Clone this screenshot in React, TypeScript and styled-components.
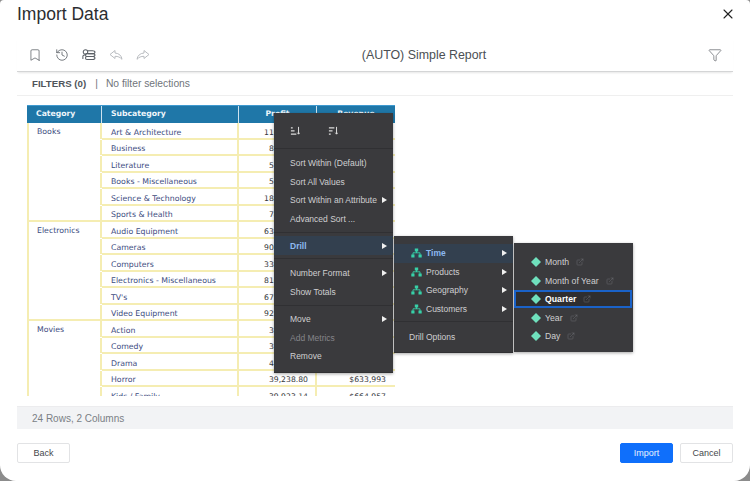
import styled, { createGlobalStyle } from 'styled-components';
import { Bookmark, ExternalLink, Funnel, History, X } from 'lucide-react';

const GlobalStyle = createGlobalStyle`
  html, body {
    margin: 0;
    padding: 0;
    background: #8c8c8c;
  }
  * {
    box-sizing: border-box;
  }
`;

const Modal = styled.div`
  width: 750px;
  height: 481px;
  padding: 0 17px;
  display: flex;
  flex-direction: column;
  overflow: hidden;
  background: #fff;
  border-radius: 4px 4px 16px 16px;
  font-family: "Liberation Sans", Arial, sans-serif;
`;

const Header = styled.div`
  height: 38px;
  padding-bottom: 10px;
  display: flex;
  align-items: center;
  justify-content: space-between;
`;

const Title = styled.h1`
  margin: 0;
  font-size: 17.5px;
  font-weight: 400;
  color: #2b2d30;
`;

const CloseButton = styled.span`
  display: flex;
  margin-right: -3px;
  color: #222;
`;

const Toolbar = styled.div`
  height: 34px;
  flex: none;
  display: flex;
  align-items: center;
  border-bottom: 1px solid #d4d5d6;
  box-shadow: 0 2px 2px -1px rgba(0, 0, 0, 0.1);
`;

const ToolIcons = styled.div`
  display: flex;
  align-items: center;
  gap: 13px;
  padding-left: 11px;
`;

const ToolIcon = styled.span<{ $muted?: boolean }>`
  display: flex;
  width: 14px;
  justify-content: center;
  color: ${props => (props.$muted ? '#b9bcc0' : '#5b6066')};
`;

const ReportName = styled.div`
  flex: 1;
  padding-right: 10px;
  text-align: center;
  font-size: 12.4px;
  color: #4b4f54;
`;

const FunnelSlot = styled.span`
  display: flex;
  margin-right: 11px;
  color: #5b6066;
`;

const FilterRow = styled.div`
  height: 24px;
  flex: none;
  padding-left: 15px;
  display: flex;
  align-items: center;
  font-size: 10.3px;
  color: #70757b;
  border-bottom: 1px solid #efefef;
`;

const FilterLabel = styled.strong`
  font-size: 9.7px;
  font-weight: 700;
  color: #50555b;
`;

const FilterDivider = styled.span`
  margin: 0 8px 0 9px;
`;

const ReportArea = styled.div`
  position: relative;
  height: 291px;
  margin-top: 9px;
  flex: none;
`;

const GridClip = styled.div`
  height: 100%;
  padding-left: 10px;
  overflow: hidden;
`;

const HeaderRow = styled.div`
  width: 368px;
  height: 18px;
  display: grid;
  grid-template-columns: 75px 137px 78px 78px;
  background: #1f77a8;
  border-top: 1px solid #3f9ad0;
`;

const HeaderCell = styled.div<{ $center?: boolean }>`
  padding-left: ${props => (props.$center ? 0 : '9px')};
  text-align: ${props => (props.$center ? 'center' : 'left')};
  font-family: "DejaVu Sans", Verdana, sans-serif;
  font-size: 7.7px;
  font-weight: 700;
  line-height: 15px;
  color: #eef6fb;
  border-right: 1px solid #cfe3ef;

  &:last-child {
    border-right: 0;
  }
`;

const Group = styled.div`
  width: 368px;
  display: flex;
  border-bottom: 2px solid #f5edb2;
`;

const CategoryCell = styled.div`
  width: 75px;
  flex: none;
  padding: 3px 0 0 8px;
  font-family: "DejaVu Sans", Verdana, sans-serif;
  font-size: 7.8px;
  line-height: 12px;
  color: #3d4c80;
  border-left: 2px solid #f5edb2;
`;

const GroupRows = styled.div`
  flex: 1;
`;

const DataRow = styled.div`
  height: 16.5px;
  display: grid;
  grid-template-columns: 137px 78px 78px;
  font-family: "DejaVu Sans", Verdana, sans-serif;
  font-size: 7.7px;
  line-height: 13px;
  border-bottom: 2px solid #f5edb2;

  &:last-child {
    height: 14.5px;
    border-bottom: 0;
  }
`;

const SubcategoryCell = styled.div`
  padding: 2.5px 0 0 9px;
  font-size: 7.8px;
  color: #3d4c80;
  box-shadow: -2px 0 0 #f5edb2, inset -2px 0 0 #f5edb2;
  white-space: nowrap;
`;

const ValueCell = styled.div`
  padding: 2.5px 9px 0 0;
  text-align: right;
  color: #36383c;
  box-shadow: inset -2px 0 0 #f5edb2;

  &:last-child {
    box-shadow: none;
  }
`;

const Menu = styled.div<{ $top: number; $left: number; $width: number }>`
  position: absolute;
  top: ${props => props.$top}px;
  left: ${props => props.$left}px;
  width: ${props => props.$width}px;
  background: #3a3a3d;
  box-shadow: 0 1px 3px rgba(0, 0, 0, 0.35);
`;

const SortIcons = styled.div`
  height: 36px;
  padding-left: 16px;
  display: flex;
  align-items: center;
  gap: 28px;
  color: #dcdcdc;
  border-bottom: 1px solid #303033;
`;

const MenuSection = styled.div<{ $top?: number; $bottom?: number }>`
  padding: ${props => props.$top ?? 5}px 0 ${props => props.$bottom ?? 4}px;
  border-bottom: 1px solid #303033;

  &:last-child {
    border-bottom: 0;
  }
`;

const MenuItem = styled.div<{ $active?: boolean; $disabled?: boolean; $indent?: number }>`
  position: relative;
  height: 18.6px;
  padding-left: ${props => props.$indent ?? 16}px;
  display: flex;
  align-items: center;
  gap: 4px;
  font-size: 8.5px;
  white-space: nowrap;
  font-weight: ${props => (props.$active ? 700 : 400)};
  color: ${props => (props.$active ? '#8db8ef' : props.$disabled ? '#85858a' : '#cfcfd1')};
  background: ${props => (props.$active ? '#33404f' : 'transparent')};
`;

const Arrow = styled.span`
  position: absolute;
  right: 6px;
  top: 50%;
  margin-top: -3px;
  border-left: 5px solid #f0f0f0;
  border-top: 3px solid transparent;
  border-bottom: 3px solid transparent;
`;

const LeafItem = styled.div<{ $selected?: boolean }>`
  height: 18.6px;
  margin-right: 1px;
  padding-left: 17px;
  display: flex;
  align-items: center;
  gap: 4px;
  font-size: 8.7px;
  white-space: nowrap;
  color: ${props => (props.$selected ? '#fff' : '#cfcfd1')};
  font-weight: ${props => (props.$selected ? 700 : 400)};
  background: ${props => (props.$selected ? '#2e2e30' : 'transparent')};
  outline: ${props => (props.$selected ? '2px solid #1a62c8' : 'none')};
  outline-offset: -2px;
`;

const LinkGlyph = styled.span`
  display: flex;
  margin-left: 3px;
  color: #74777b;
`;

const StatusBar = styled.div`
  height: 23px;
  margin-top: 10px;
  flex: none;
  padding-left: 15px;
  display: flex;
  align-items: center;
  font-size: 10px;
  color: #7b7f85;
  background: #f2f3f5;
  border-top: 1px solid #ececee;
`;

const Footer = styled.div`
  margin-top: 14px;
  display: flex;
  gap: 7px;
`;

const Button = styled.button<{ $primary?: boolean }>`
  width: 53px;
  height: 20px;
  padding: 0;
  font-family: inherit;
  font-size: 9px;
  border-radius: 2px;
  color: ${props => (props.$primary ? '#e8f1ff' : '#45484c')};
  background: ${props => (props.$primary ? '#0f6ffb' : '#fff')};
  border: 1px solid ${props => (props.$primary ? '#0f6ffb' : '#e2e3e5')};
`;

const FooterSpacer = styled.div`
  flex: 1;
`;

function ReportIcon() {
  return (
    <svg width="16" height="14" viewBox="0 0 16 14" fill="none" stroke="currentColor" strokeWidth="1.2">
      <circle cx="4" cy="3.6" r="2.6" />
      <path d="M1 11.5V8.6C1 7.4 2.2 6.8 4 6.8" />
      <path d="M6.6 2.2h5.4c1.6 0 2.8.6 2.8 1.6S13.6 5.4 12 5.4H7" />
      <path d="M5 5.4h7c1.6 0 2.8.7 2.8 1.7S13.6 8.8 12 8.8H5.6C4.6 8.8 4 8 4 7.1S4.4 5.4 5 5.4z" />
      <path d="M5.6 8.8H12c1.6 0 2.8.7 2.8 1.7S13.6 12.2 12 12.2H5.6c-1 0-1.6-.8-1.6-1.7s.6-1.7 1.6-1.7z" />
    </svg>
  );
}

function HollowArrow({ flip }: { flip?: boolean }) {
  return (
    <svg width="14" height="12" viewBox="0 0 14 12" fill="none" stroke="currentColor" strokeWidth="1" strokeLinejoin="round">
      <path
        transform={flip ? 'matrix(-1 0 0 1 14 0)' : undefined}
        d="M6 1.5 1 5.5l5 4V7.3c3 0 5 .8 7 3-.4-3.6-3-6-7-6.3z"
      />
    </svg>
  );
}

function SortGlyph({ descending }: { descending?: boolean }) {
  const bars = descending ? 'M1 3h6M1 6.5h4M1 10h2' : 'M1 3h2M1 6.5h4M1 10h6';
  return (
    <svg width="10" height="11" viewBox="0 0 11 12" fill="none" stroke="currentColor" strokeWidth="1.4">
      <path d={bars} />
      <path d="M9.4 2v8M8 8.4 9.4 10l1.4-1.6" strokeWidth="1.1" />
    </svg>
  );
}

function HierarchyIcon() {
  return (
    <svg width="11" height="10" viewBox="0 0 11 10" fill="#37d0a8" stroke="none">
      <rect x="3.8" y="0.5" width="3.4" height="3" />
      <rect x="0.3" y="6.5" width="3.2" height="3" />
      <rect x="7.5" y="6.5" width="3.2" height="3" />
      <path d="M2 7V4.8h7V7" fill="none" stroke="#37d0a8" strokeWidth="0.9" />
      <path d="M5.5 3v2" fill="none" stroke="#37d0a8" strokeWidth="0.9" />
    </svg>
  );
}

function DiamondIcon() {
  return (
    <svg width="10" height="10" viewBox="0 0 10 10">
      <path d="M5 0 10 5 5 10 0 5z" fill="#6fe0bd" />
    </svg>
  );
}

const groups = [
  {
    name: 'Books',
    rows: [
      ['Art & Architecture', '116,482.30', '$1,204,310'],
      ['Business', '89,120.75', '$903,224'],
      ['Literature', '57,306.18', '$612,870'],
      ['Books - Miscellaneous', '52,944.60', '$558,102'],
      ['Science & Technology', '184,210.42', '$1,873,455'],
      ['Sports & Health', '74,518.09', '$790,336'],
    ],
  },
  {
    name: 'Electronics',
    rows: [
      ['Audio Equipment', '632,118.40', '$6,120,774'],
      ['Cameras', '906,447.25', '$8,904,120'],
      ['Computers', '338,902.66', '$3,317,560'],
      ['Electronics - Miscellaneous', '816,230.11', '$7,980,442'],
      ["TV's", '679,015.37', '$6,642,018'],
      ['Video Equipment', '927,364.80', '$9,105,236'],
    ],
  },
  {
    name: 'Movies',
    rows: [
      ['Action', '37,410.22', '$602,118'],
      ['Comedy', '32,885.94', '$571,940'],
      ['Drama', '42,106.57', '$688,205'],
      ['Horror', '39,238.80', '$633,993'],
      ['Kids / Family', '39,923.14', '$664,957'],
    ],
  },
];

const drillTargets = ['Time', 'Products', 'Geography', 'Customers'];

const attributes = ['Month', 'Month of Year', 'Quarter', 'Year', 'Day'];

export default function App() {
  return (
    <Modal>
      <GlobalStyle />
      <Header>
        <Title>Import Data</Title>
        <CloseButton>
          <X size={16} strokeWidth={1.6} />
        </CloseButton>
      </Header>
      <Toolbar>
        <ToolIcons>
          <ToolIcon><Bookmark size={14} strokeWidth={1.3} /></ToolIcon>
          <ToolIcon><History size={14} strokeWidth={1.4} /></ToolIcon>
          <ToolIcon><ReportIcon /></ToolIcon>
          <ToolIcon $muted><HollowArrow /></ToolIcon>
          <ToolIcon $muted><HollowArrow flip /></ToolIcon>
        </ToolIcons>
        <ReportName>(AUTO) Simple Report</ReportName>
        <FunnelSlot><Funnel size={14} strokeWidth={1.2} /></FunnelSlot>
      </Toolbar>
      <FilterRow>
        <FilterLabel>FILTERS (0)</FilterLabel>
        <FilterDivider>|</FilterDivider>
        No filter selections
      </FilterRow>
      <ReportArea>
        <GridClip>
          <HeaderRow>
            <HeaderCell>Category</HeaderCell>
            <HeaderCell>Subcategory</HeaderCell>
            <HeaderCell $center>Profit</HeaderCell>
            <HeaderCell $center>Revenue</HeaderCell>
          </HeaderRow>
          {groups.map(group => (
            <Group key={group.name}>
              <CategoryCell>{group.name}</CategoryCell>
              <GroupRows>
                {group.rows.map(([subcategory, profit, revenue]) => (
                  <DataRow key={subcategory}>
                    <SubcategoryCell>{subcategory}</SubcategoryCell>
                    <ValueCell>{profit}</ValueCell>
                    <ValueCell>{revenue}</ValueCell>
                  </DataRow>
                ))}
              </GroupRows>
            </Group>
          ))}
        </GridClip>
        <Menu $top={8} $left={257} $width={119}>
          <SortIcons>
            <SortGlyph />
            <SortGlyph descending />
          </SortIcons>
          <MenuSection>
            <MenuItem>Sort Within (Default)</MenuItem>
            <MenuItem>Sort All Values</MenuItem>
            <MenuItem>Sort Within an Attribute<Arrow /></MenuItem>
            <MenuItem>Advanced Sort ...</MenuItem>
          </MenuSection>
          <MenuSection $top={3} $bottom={3}>
            <MenuItem $active>Drill<Arrow /></MenuItem>
          </MenuSection>
          <MenuSection>
            <MenuItem>Number Format<Arrow /></MenuItem>
            <MenuItem>Show Totals</MenuItem>
          </MenuSection>
          <MenuSection $top={3.5} $bottom={7}>
            <MenuItem>Move<Arrow /></MenuItem>
            <MenuItem $disabled>Add Metrics</MenuItem>
            <MenuItem>Remove</MenuItem>
          </MenuSection>
          <Menu $top={123} $left={120} $width={119}>
            <MenuSection $top={8} $bottom={3}>
              {drillTargets.map((target, index) => (
                <MenuItem key={target} $active={index === 0} $indent={17}>
                  <HierarchyIcon />
                  {target}
                  <Arrow />
                </MenuItem>
              ))}
            </MenuSection>
            <MenuSection $bottom={6}>
              <MenuItem $indent={15}>Drill Options</MenuItem>
            </MenuSection>
            <Menu $top={7} $left={120} $width={119}>
              <MenuSection $top={9.7} $bottom={6.3}>
                {attributes.map(attribute => (
                  <LeafItem key={attribute} $selected={attribute === 'Quarter'}>
                    <DiamondIcon />
                    {attribute}
                    <LinkGlyph><ExternalLink size={8} strokeWidth={1.3} /></LinkGlyph>
                  </LeafItem>
                ))}
              </MenuSection>
            </Menu>
          </Menu>
        </Menu>
      </ReportArea>
      <StatusBar>24 Rows, 2 Columns</StatusBar>
      <Footer>
        <Button>Back</Button>
        <FooterSpacer />
        <Button $primary>Import</Button>
        <Button>Cancel</Button>
      </Footer>
    </Modal>
  );
}
